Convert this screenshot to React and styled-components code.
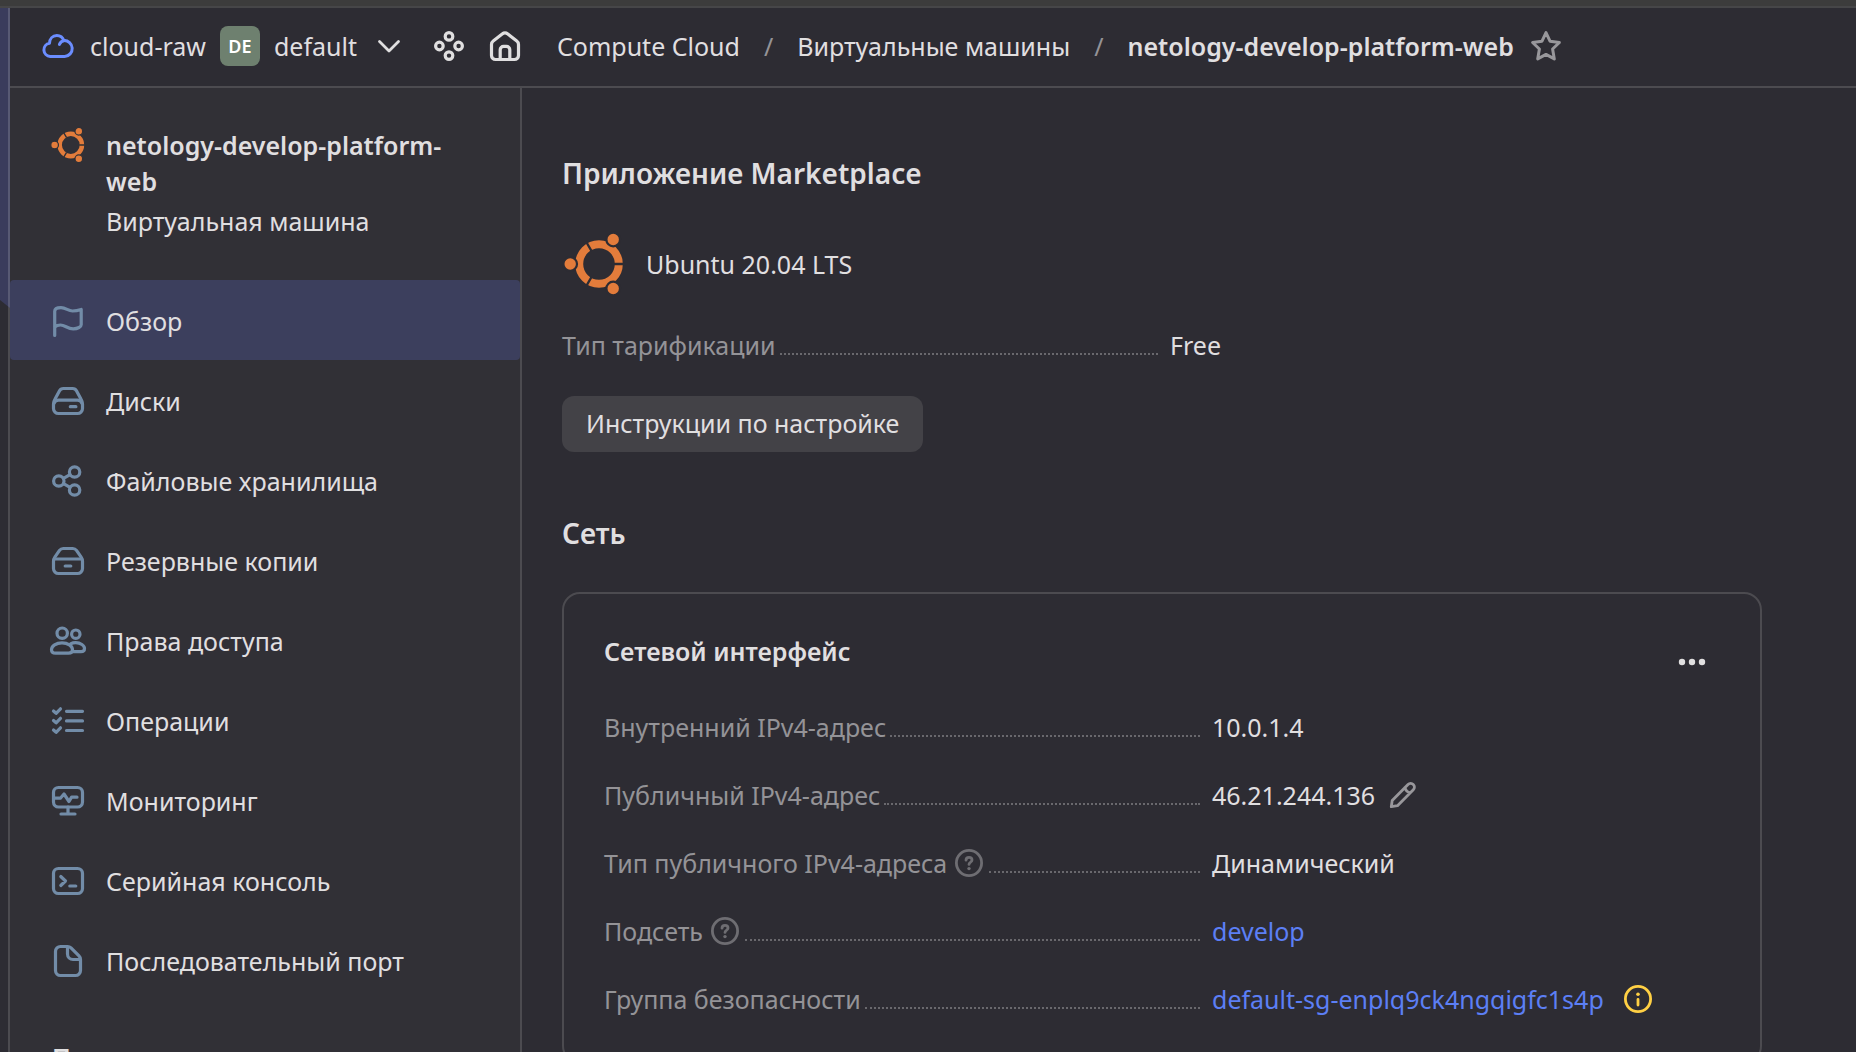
import React from "react";
import styled, { createGlobalStyle, css } from "styled-components";

const color = {
  page: "#2d2c33",
  side: "#313036",
  line: "#4c4b50",
  text: "#e0dfe0",
  muted: "#949397",
  hint: "#6e6d72",
  link: "#5c7ff5",
  icon: "#728ca8",
  orange: "#e37c3b",
};

const GlobalStyle = createGlobalStyle`
  *, *::before, *::after { box-sizing: border-box; }
  body {
    margin: 0;
    background: ${color.page};
    color: ${color.text};
    font: 400 25px/34px "Noto Sans", "Open Sans", sans-serif;
  }
  h1, h2, h3, p, dl, dt, dd, ul, ol { margin: 0; padding: 0; font-size: inherit; font-weight: inherit; }
  ul, ol { list-style: none; }
  a { color: inherit; text-decoration: none; }
  button { font: inherit; color: inherit; border: 0; padding: 0; background: none; cursor: pointer; }
  svg { display: block; flex: none; overflow: visible; }
`;

/* ---------- frame ---------- */

const Shell = styled.div`
  display: flex;
  flex-direction: column;
  height: 100vh;
  overflow: hidden;
`;

const WindowEdge = styled.div`
  flex: none;
  height: 8px;
  background: #3c3c3c;
  border-bottom: 2px solid #464648;
`;

const Frame = styled.div`
  display: flex;
  flex: 1;
  min-height: 0;
`;

const Rail = styled.div`
  flex: none;
  width: 10px;
  background: linear-gradient(${color.line}, ${color.line}) right / 2px 100% no-repeat ${color.page};
`;

const RailFill = styled.div`
  height: 300px;
  background: #3a3c5c;
  border-right: 2px solid #585a74;
  clip-path: polygon(0 0, 100% 0, 100% 100%, 0 calc(100% - 8px));
`;

const Workspace = styled.div`
  display: flex;
  flex-direction: column;
  flex: 1;
  min-width: 0;
`;

const Columns = styled.div`
  display: flex;
  flex: 1;
  min-height: 0;
`;

/* ---------- top bar ---------- */

const TopBar = styled.header`
  display: flex;
  align-items: center;
  flex: none;
  height: 80px;
  padding: 0 32px 2px;
  border-bottom: 2px solid ${color.line};
  white-space: nowrap;
`;

const Scope = styled.div`
  display: flex;
  align-items: center;
  gap: 14px;
`;

const ScopeLink = styled.a`
  display: flex;
  align-items: center;
  gap: 16px;
`;

const Badge = styled.span`
  display: grid;
  place-items: center;
  width: 40px;
  height: 40px;
  border-radius: 8px;
  background: #6e806f;
  color: #fff;
  font-size: 18px;
  font-weight: 600;
`;

const ScopeButton = styled.button`
  display: flex;
  align-items: center;
  gap: 20px;
`;

const Shortcuts = styled.nav`
  display: flex;
  gap: 24px;
  margin: 0 36px 0 32px;
`;

const Crumbs = styled.ol`
  display: flex;
  align-items: center;
`;

const Crumb = styled.li`
  font-weight: ${(p) => (p.$current ? 600 : 400)};

  &:not(:first-child)::before {
    content: "/";
    margin: 0 24px;
    color: ${color.muted};
    font-weight: 400;
  }
`;

const StarButton = styled.button`
  margin-left: 16px;
  color: #98979b;
`;

/* ---------- sidebar ---------- */

const Sidebar = styled.aside`
  flex: none;
  width: 512px;
  background: ${color.side};
  border-right: 2px solid ${color.line};
`;

const rowInset = css`
  display: flex;
  gap: 22px;
  padding-left: 42px;
`;

const Resource = styled.div`
  ${rowInset}
  padding-top: 39px;
  padding-right: 64px;
  padding-bottom: 41px;
  line-height: 36px;
`;

const Slot = styled.span`
  display: flex;
  align-items: center;
  justify-content: center;
  flex: none;
  width: 32px;
  height: 36px;
  color: ${color.icon};
`;

const ResourceText = styled.div`
  display: flex;
  flex-direction: column;
  gap: 4px;
`;

const ResourceName = styled.h1`
  font-weight: 600;
`;

const NavLink = styled.a`
  ${rowInset}
  align-items: center;
  height: 80px;
  padding-top: 2px;
  border-radius: 4px;
  background: ${(p) => (p.$active ? "#3c3f5d" : "transparent")};
`;

const NavGroup = styled.h3`
  padding: 40px 42px 0;
  font-weight: 600;
`;

/* ---------- content ---------- */

const Content = styled.main`
  flex: 1;
  min-width: 0;
  padding: 68px 94px 0 40px;
`;

const Section = styled.section`
  & + & { margin-top: 64px; }
`;

const Title = styled.h2`
  font-size: 28px;
  font-weight: 600;
`;

const Product = styled.div`
  display: flex;
  align-items: center;
  gap: 20px;
  margin: 42px 0 32px;
`;

const Facts = styled.dl`
  display: flex;
  flex-direction: column;
  gap: 34px;
`;

const Fact = styled.div`
  display: grid;
  grid-template-columns: 596px 1fr;
  gap: 12px;
`;

const Term = styled.dt`
  display: flex;
  align-items: center;
  gap: 4px;
  color: ${color.muted};
  white-space: nowrap;

  &::after {
    content: "";
    flex: 1;
    align-self: flex-end;
    margin-bottom: 7px;
    border-bottom: 2px dotted #69686d;
  }
`;

const Value = styled.dd`
  display: flex;
  align-items: center;
  gap: ${(p) => p.$gap || 14}px;
  white-space: nowrap;
`;

const Link = styled.a`
  color: ${color.link};
`;

const IconButton = styled.button`
  color: ${(p) => p.$color};
`;

const HintButton = styled(IconButton)`
  margin: 0 2px 0 4px;
`;

const SoftButton = styled.button`
  height: 56px;
  margin-top: 34px;
  padding: 0 24px 2px;
  border-radius: 12px;
  background: #434247;
`;

const Card = styled.article`
  max-width: 1200px;
  margin-top: 42px;
  padding: 40px 40px 46px;
  border: 2px solid ${color.line};
  border-radius: 18px;
`;

const CardHead = styled.div`
  display: flex;
  justify-content: space-between;
  margin-bottom: 20px;
`;

const CardTitle = styled.h3`
  font-weight: 600;
`;

const MoreButton = styled.button`
  display: grid;
  place-items: center;
  width: 56px;
  height: 56px;
`;

/* ---------- icons ---------- */

const Icon = ({ size = 32, box = 32, weight = 3.2, children }) => (
  <svg
    width={size}
    height={size}
    viewBox={`0 0 ${box} ${box}`}
    fill="none"
    stroke="currentColor"
    strokeWidth={weight}
    strokeLinecap="round"
    strokeLinejoin="round"
    aria-hidden="true"
  >
    {children}
  </svg>
);

const CloudIcon = () => (
  <svg width="32" height="32" viewBox="0 0 16 16" fill="none" stroke="#6b8dff" strokeWidth="1.5" strokeLinecap="round" strokeLinejoin="round" aria-hidden="true">
    <path d="M4.1 13.25A3.35 3.35 0 0 1 3.75 6.6C3.85 4.4 5.3 2.75 7.4 2.75c1.7 0 3 1 3.5 2.5a4 4 0 0 1 .4 8H4.1Z" />
    <path d="M8.7 7.2c.4-1.1 1.3-1.8 2.6-1.95" />
  </svg>
);

const ChevronIcon = () => (
  <Icon size={24} box={24} weight={2.8}>
    <path d="m2.5 7.5 9.5 9.5 9.5-9.5" />
  </Icon>
);

const ServicesIcon = () => (
  <Icon>
    <circle cx="16" cy="6.4" r="3.8" />
    <circle cx="6.4" cy="16" r="3.8" />
    <circle cx="25.6" cy="16" r="3.8" />
    <circle cx="16" cy="25.6" r="3.8" />
  </Icon>
);

const HomeIcon = () => (
  <Icon>
    <path d="M2.5 14.4c0-1.4.6-2.6 1.7-3.4l9-7a4.6 4.6 0 0 1 5.600 0l9 7c1.1.8 1.7 2 1.7 3.4v11.1a4 4 0 0 1-4 4h-19a4 4 0 0 1-4-4Z" />
    <path d="M11.2 29v-9.3a3.4 3.4 0 0 1 3.4-3.4h2.8a3.4 3.4 0 0 1 3.4 3.4V29" />
  </Icon>
);

const StarIcon = () => (
  <Icon weight={3}>
    <path d="M16 2.6 20 11.2 29.4 12.5 22.6 19 24.3 28.9 16 24.4 7.7 28.9 9.4 19 2.6 12.5 12 11.2Z" />
  </Icon>
);

const UbuntuLogo = ({ size = 64, ground }) => (
  <svg width={size} height={size} viewBox="0 0 64 64" aria-hidden="true">
    <circle cx="37" cy="32" r="19.8" fill="none" stroke={color.orange} strokeWidth="8" />
    <g stroke={ground} strokeWidth="2.4">
      <path d="M52 32h12M29.5 19 24 9.5M29.5 45 24 54.5" />
    </g>
    <g fill={color.orange} stroke={ground} strokeWidth="2.2">
      <circle cx="8.2" cy="32" r="6.8" />
      <circle cx="51.2" cy="7.5" r="6.8" />
      <circle cx="51.2" cy="56.5" r="6.8" />
    </g>
  </svg>
);

const FlagIcon = () => (
  <Icon>
    <path d="M2.7 30.5V6.2C2.7 3.5 6 2.6 9 2.6c5 0 7 3.4 11.5 3.4 3.5 0 6-.6 8.7-1.5v15.2c0 2-3.2 4.1-8 4.1C15.5 23.8 13 20 8.5 20c-2.5 0-4.5.8-5.8 2" />
  </Icon>
);

const DiskIcon = () => (
  <Icon>
    <path d="M11.4 3.5h9.2c1.7 0 3.2.9 4 2.4l4.6 8.6c.9 1.5 1.3 2.8 1.3 4.5v4.5a5 5 0 0 1-5 5h-19a5 5 0 0 1-5-5V19c0-1.7.4-3 1.3-4.5l4.6-8.6c.8-1.5 2.3-2.4 4-2.4Z" />
    <path d="M2 18.5c.8-2.2 2.4-3.3 4.5-3.3h19c2.1 0 3.7 1.1 4.5 3.3M18.3 21.700h5.6" />
  </Icon>
);

const BackupIcon = () => (
  <Icon>
    <path d="M11.2 3.5h9.6c1.5 0 2.8.7 3.7 1.9l4.5 6.5c1 1.4 1.5 2.8 1.5 4.4v7.2a5 5 0 0 1-5 5h-19a5 5 0 0 1-5-5v-7.2c0-1.6.5-3 1.5-4.4l4.5-6.5c.9-1.2 2.2-1.9 3.7-1.9Z" />
    <path d="M2.5 14h27M13.2 21h5.6" />
  </Icon>
);

const ShareIcon = () => (
  <Icon>
    <circle cx="6.8" cy="16" r="5.2" />
    <circle cx="22.6" cy="7" r="5.2" />
    <circle cx="22.6" cy="25" r="5.2" />
    <path d="m11.5 13.4 6.5-3.8M11.5 18.6l6.5 3.8" />
  </Icon>
);

const UsersIcon = () => (
  <Icon>
    <circle cx="10.2" cy="8.2" r="5.2" />
    <circle cx="23.8" cy="9.2" r="4.2" />
    <path d="M-.5 24.8c0-3.8 4.7-7 10.5-7s10.5 3.2 10.5 7c0 2.2-1.6 3.4-4 3.4h-13c-2.4 0-4-1.2-4-3.4Z" />
    <path d="M18.5 18.9c1.6-.8 3.3-1.2 5.2-1.2 4.8 0 8.8 2.8 8.8 5.8 0 2-1.4 3.1-3.5 3.1h-8.5" />
  </Icon>
);

const ListIcon = () => (
  <Icon>
    <path d="M14.5 6.3h16M14.5 15.9h16M14.5 25.5h16" />
    <path d="m1.5 6 2.6 2.3 4.4-4.5M1.5 15.5l2.6 2.3 4.4-4.5M1.5 25l2.6 2.3 4.4-4.5" />
  </Icon>
);

const MonitorIcon = () => (
  <Icon>
    <rect x="1.5" y="2.5" width="29" height="19.5" rx="5" />
    <path d="M3 13.2h5.4L12 9l5 7.5 2.6-4.3H25M16 22v6M9 29h14" />
  </Icon>
);

const ConsoleIcon = () => (
  <Icon>
    <rect x="1.5" y="3.5" width="29" height="25" rx="5" />
    <path d="m8.8 11.5 4.7 4.5-4.7 4.500M17.8 21h6" />
  </Icon>
);

const FileIcon = () => (
  <Icon>
    <path d="M8.5 1.5h7c1.4 0 2.5.4 3.5 1.4l8 8c1 1 1.5 2.2 1.5 3.6v11a5 5 0 0 1-5 5h-15a5 5 0 0 1-5-5v-19a5 5 0 0 1 5-5Z" />
    <path d="M15.5 2v7a5.5 5.5 0 0 0 5.5 5.500h7" />
  </Icon>
);

const HelpIcon = () => (
  <Icon size={28} box={28} weight={2.8}>
    <circle cx="14" cy="14" r="12.600" />
    <path d="M11 11.2c0-1.7 1.3-2.9 3-2.9s3 1.2 3 2.8c0 2-3 2.3-3 4.3" />
    <circle cx="14" cy="19.6" r="1.7" fill="currentColor" stroke="none" />
  </Icon>
);

const InfoIcon = () => (
  <Icon size={28} box={28} weight={2.8}>
    <circle cx="14" cy="14" r="12.6" />
    <path d="M14 14.5v5.5" />
    <circle cx="14" cy="9.3" r="1.8" fill="currentColor" stroke="none" />
  </Icon>
);

const PencilIcon = () => (
  <Icon size={28} box={28} weight={2.8}>
    <path d="M2.3 25.7 3.2 19.5 19 3.4a3.7 3.7 0 0 1 5.3 0 3.7 3.7 0 0 1 0 5.3L8.5 24.7ZM16 6.5c.5 2.8 2.4 4.7 5.3 5.3" />
  </Icon>
);

const MoreIcon = () => (
  <svg width="28" height="8" viewBox="0 0 28 8" fill="currentColor" aria-hidden="true">
    <circle cx="4" cy="4" r="3.2" />
    <circle cx="14" cy="4" r="3.2" />
    <circle cx="24" cy="4" r="3.2" />
  </svg>
);

/* ---------- data ---------- */

const navItems = [
  ["Обзор", FlagIcon],
  ["Диски", DiskIcon],
  ["Файловые хранилища", ShareIcon],
  ["Резервные копии", BackupIcon],
  ["Права доступа", UsersIcon],
  ["Операции", ListIcon],
  ["Мониторинг", MonitorIcon],
  ["Серийная консоль", ConsoleIcon],
  ["Последовательный порт", FileIcon],
];

const Hint = () => (
  <HintButton type="button" aria-label="Справка" $color={color.hint}>
    <HelpIcon />
  </HintButton>
);

export default function App() {
  return (
    <Shell>
      <GlobalStyle />
      <WindowEdge />
      <Frame>
        <Rail>
          <RailFill />
        </Rail>
        <Workspace>
          <TopBar>
            <Scope>
              <ScopeLink href="#cloud">
                <CloudIcon />
                cloud-raw
              </ScopeLink>
              <Badge>DE</Badge>
              <ScopeButton type="button">
                default
                <ChevronIcon />
              </ScopeButton>
            </Scope>
            <Shortcuts>
              <a href="#services" aria-label="Сервисы"><ServicesIcon /></a>
              <a href="#home" aria-label="Главная"><HomeIcon /></a>
            </Shortcuts>
            <Crumbs>
              <Crumb><a href="#compute">Compute Cloud</a></Crumb>
              <Crumb><a href="#instances">Виртуальные машины</a></Crumb>
              <Crumb $current>netology-develop-platform-web</Crumb>
            </Crumbs>
            <StarButton type="button" aria-label="В избранное"><StarIcon /></StarButton>
          </TopBar>
          <Columns>
            <Sidebar>
              <Resource>
                <Slot><UbuntuLogo size={36} ground={color.side} /></Slot>
                <ResourceText>
                  <ResourceName>netology-develop-platform-web</ResourceName>
                  <p>Виртуальная машина</p>
                </ResourceText>
              </Resource>
              <nav>
                <ul>
                  {navItems.map(([label, Glyph], i) => (
                    <li key={label}>
                      <NavLink href={`#section-${i}`} $active={i === 0}>
                        <Slot><Glyph /></Slot>
                        {label}
                      </NavLink>
                    </li>
                  ))}
                </ul>
                <NavGroup>П</NavGroup>
              </nav>
            </Sidebar>
            <Content>
              <Section>
                <Title>Приложение Marketplace</Title>
                <Product>
                  <UbuntuLogo ground={color.page} />
                  Ubuntu 20.04 LTS
                </Product>
                <Facts>
                  <Fact>
                    <Term>Тип тарификации</Term>
                    <Value>Free</Value>
                  </Fact>
                </Facts>
                <SoftButton type="button">Инструкции по настройке</SoftButton>
              </Section>
              <Section>
                <Title>Сеть</Title>
                <Card>
                  <CardHead>
                    <CardTitle>Сетевой интерфейс</CardTitle>
                    <MoreButton type="button" aria-label="Действия"><MoreIcon /></MoreButton>
                  </CardHead>
                  <Facts>
                    <Fact>
                      <Term>Внутренний IPv4-адрес</Term>
                      <Value>10.0.1.4</Value>
                    </Fact>
                    <Fact>
                      <Term>Публичный IPv4-адрес</Term>
                      <Value>
                        46.21.244.136
                        <IconButton type="button" aria-label="Изменить" $color="#98979b"><PencilIcon /></IconButton>
                      </Value>
                    </Fact>
                    <Fact>
                      <Term>Тип публичного IPv4-адреса<Hint /></Term>
                      <Value>Динамический</Value>
                    </Fact>
                    <Fact>
                      <Term>Подсеть<Hint /></Term>
                      <Value><Link href="#subnet">develop</Link></Value>
                    </Fact>
                    <Fact>
                      <Term>Группа безопасности</Term>
                      <Value $gap={20}>
                        <Link href="#security-group">default-sg-enplq9ck4ngqigfc1s4p</Link>
                        <IconButton type="button" aria-label="Подробнее" $color="#ffd044"><InfoIcon /></IconButton>
                      </Value>
                    </Fact>
                  </Facts>
                </Card>
              </Section>
            </Content>
          </Columns>
        </Workspace>
      </Frame>
    </Shell>
  );
}
